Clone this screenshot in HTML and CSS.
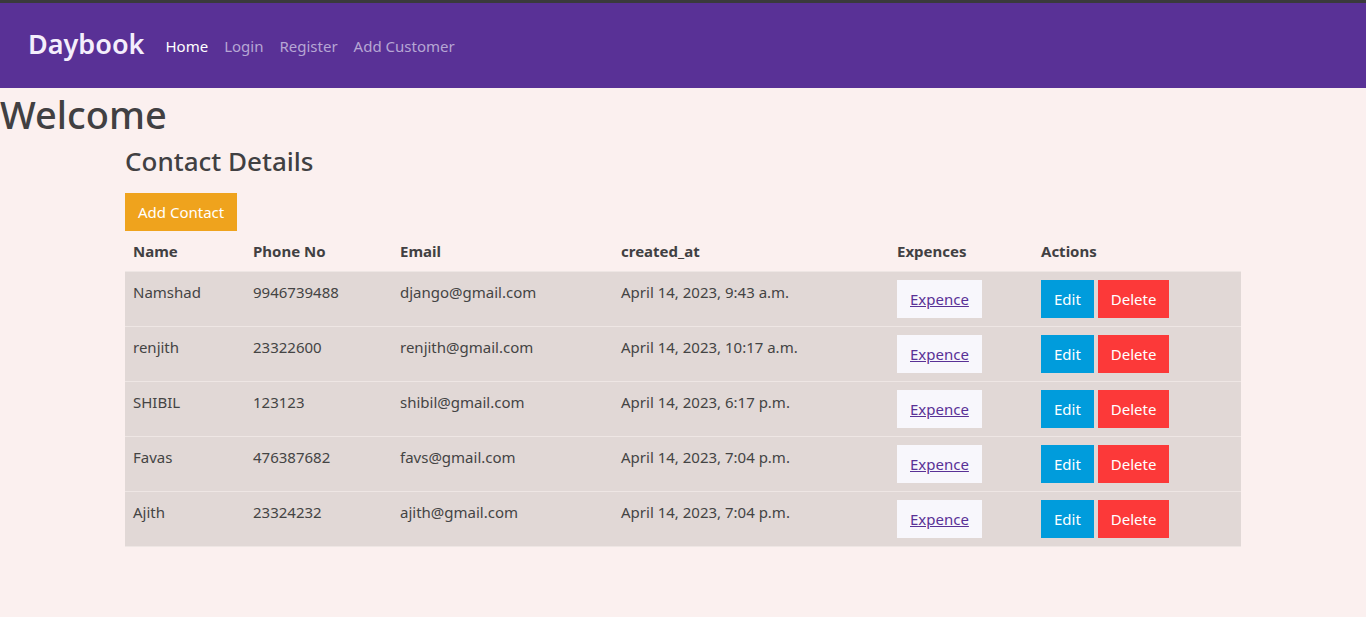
FILE: index.html
```html
<!DOCTYPE html>
<html lang="en">
<head>
<meta charset="utf-8">
<title>Daybook</title>
<link rel="stylesheet" href="styles.css">
</head>
<body>
<div class="topline"></div>
<nav class="navbar">
  <a class="brand" href="#">Daybook</a>
  <ul class="nav">
    <li><a class="nav-link active" href="#">Home</a></li>
    <li><a class="nav-link" href="#">Login</a></li>
    <li><a class="nav-link" href="#">Register</a></li>
    <li><a class="nav-link" href="#">Add Customer</a></li>
  </ul>
</nav>
<h1 class="welcome">Welcome</h1>
<div class="container">
  <h3 class="title">Contact Details</h3>
  <a class="btn btn-warning" href="#">Add Contact</a>
  <table class="table">
    <colgroup>
      <col class="c1"><col class="c2"><col class="c3"><col class="c4"><col class="c5"><col class="c6">
    </colgroup>
    <thead>
      <tr><th>Name</th><th>Phone No</th><th>Email</th><th>created_at</th><th>Expences</th><th>Actions</th></tr>
    </thead>
    <tbody>
      <tr><td>Namshad</td><td>9946739488</td><td>django@gmail.com</td><td>April 14, 2023, 9:43 a.m.</td><td><a class="btn btn-light" href="#"><span class="link">Expence</span></a></td><td><a class="btn btn-info" href="#">Edit</a> <a class="btn btn-danger" href="#">Delete</a></td></tr>
      <tr><td>renjith</td><td>23322600</td><td>renjith@gmail.com</td><td>April 14, 2023, 10:17 a.m.</td><td><a class="btn btn-light" href="#"><span class="link">Expence</span></a></td><td><a class="btn btn-info" href="#">Edit</a> <a class="btn btn-danger" href="#">Delete</a></td></tr>
      <tr><td>SHIBIL</td><td>123123</td><td>shibil@gmail.com</td><td>April 14, 2023, 6:17 p.m.</td><td><a class="btn btn-light" href="#"><span class="link">Expence</span></a></td><td><a class="btn btn-info" href="#">Edit</a> <a class="btn btn-danger" href="#">Delete</a></td></tr>
      <tr><td>Favas</td><td>476387682</td><td>favs@gmail.com</td><td>April 14, 2023, 7:04 p.m.</td><td><a class="btn btn-light" href="#"><span class="link">Expence</span></a></td><td><a class="btn btn-info" href="#">Edit</a> <a class="btn btn-danger" href="#">Delete</a></td></tr>
      <tr><td>Ajith</td><td>23324232</td><td>ajith@gmail.com</td><td>April 14, 2023, 7:04 p.m.</td><td><a class="btn btn-light" href="#"><span class="link">Expence</span></a></td><td><a class="btn btn-info" href="#">Edit</a> <a class="btn btn-danger" href="#">Delete</a></td></tr>
    </tbody>
  </table>
</div>
</body>
</html>
```
FILE: styles.css
```css
* { box-sizing: border-box; }
html, body { margin: 0; padding: 0; }
body {
  background: #fbf0ef;
  color: #444444;
  font-family: "Noto Sans", "Open Sans", sans-serif;
  font-size: 15px;
  line-height: 24px;
}
a { text-decoration: none; }
.topline { height: 3px; background: #3a3a3c; }
.navbar {
  background: #593196;
  height: 85px;
  display: flex;
  align-items: center;
  padding: 0 28px;
}
.brand {
  color: #f4eefc;
  font-size: 27px;
  font-weight: 600;
  margin-right: 21px;
  margin-top: -4px;
}
.nav { list-style: none; margin: 0; padding: 0; display: flex; gap: 16px; }
.nav-link { color: #b6a6d4; font-size: 15px; }
.nav-link.active { color: #ffffff; }
.welcome {
  margin: 0;
  font-size: 38px;
  font-weight: 500;
  line-height: 53px;
  color: #414042;
}
.container { width: 1116px; margin: 0 auto; }
.title {
  margin: 0 0 12px;
  font-size: 26px;
  font-weight: 500;
  line-height: 40px;
  color: #414042;
}
.btn {
  display: inline-block;
  padding: 7px 13px;
  line-height: 24px;
  font-size: 15px;
  vertical-align: top;
}
.btn-warning { background: #efa31d; color: #ffffff; }
.btn-light { background: #f8f7fc; color: #593196; }
.btn-light .link { text-decoration: underline; }
.btn-info { background: #009cdc; color: #ffffff; }
.btn-danger { background: #fc3939; color: #ffffff; }
.table { width: 100%; border-collapse: collapse; table-layout: fixed; margin-top: 0; }
.c1 { width: 120px; } .c2 { width: 147px; } .c3 { width: 221px; }
.c4 { width: 276px; } .c5 { width: 144px; } .c6 { width: 208px; }
th {
  text-align: left;
  font-weight: 700;
  padding: 8px;
  height: 39px;
  color: #414042;
}
td {
  padding: 8px;
  vertical-align: top;
  background: #e1d8d6;
  border-top: 1px solid #eee6e4;
  white-space: nowrap;
}
tbody tr:last-child td { border-bottom: 1px solid #eee6e4; }
```
